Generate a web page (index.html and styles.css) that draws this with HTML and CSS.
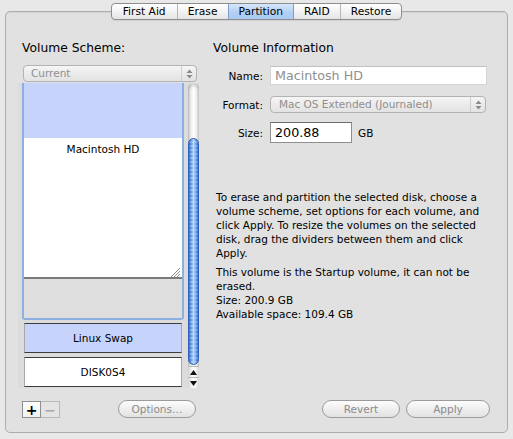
FILE: index.html
```html
<!DOCTYPE html>
<html lang="en">
<head>
<meta charset="utf-8">
<title>Disk Utility – Partition</title>
<link rel="stylesheet" href="styles.css">
</head>
<body>
<div class="window">
  <div class="tabs">
    <div class="tab">First Aid</div>
    <div class="tab">Erase</div>
    <div class="tab selected">Partition</div>
    <div class="tab">RAID</div>
    <div class="tab">Restore</div>
  </div>

  <div class="panel">
    <div class="col left">
      <div class="heading">Volume Scheme:</div>
      <div class="popup scheme-popup">
        <span class="popup-text">Current</span>
        <span class="popup-arrows"><svg width="7" height="10" viewBox="0 0 7 10"><path d="M3.5 0.5 L6.5 4 H0.5 Z M0.5 6 H6.5 L3.5 9.5 Z" fill="#8a8a8a"/></svg></span>
      </div>

      <div class="map">
        <div class="volumes">
          <div class="vol-selected">
            <div class="used"></div>
            <div class="vol-white">
              <span class="vol-name">Macintosh HD</span>
              <svg class="grip" width="10" height="10" viewBox="0 0 10 10">
                <path d="M1 10 L10 1 M4 10 L10 4 M7 10 L10 7" stroke="#8c8c8c" stroke-width="1"/>
                <path d="M2 10 L10 2 M5 10 L10 5 M8 10 L10 8" stroke="#ffffff" stroke-width="1"/>
              </svg>
            </div>
            <div class="vol-divider"></div>
            <div class="vol-gray"></div>
          </div>
          <div class="vol swap">Linux Swap</div>
          <div class="vol plain">DISK0S4</div>
        </div>
        <div class="scrollbar">
          <div class="track"><div class="thumb"></div></div>
          <div class="arrow up"><svg width="7" height="5" viewBox="0 0 7 5"><path d="M3.5 0 L7 5 H0 Z" fill="#111"/></svg></div>
          <div class="arrow down"><svg width="7" height="5" viewBox="0 0 7 5"><path d="M0 0 H7 L3.5 5 Z" fill="#111"/></svg></div>
        </div>
      </div>

      <div class="footer left-footer">
        <div class="pm-group">
          <button class="pm plus">+</button>
          <button class="pm minus">−</button>
        </div>
        <button class="pill options">Options…</button>
      </div>
    </div>

    <div class="col right">
      <div class="heading">Volume Information</div>
      <div class="row name-row">
        <span class="label">Name:</span>
        <div class="field name-field">Macintosh HD</div>
      </div>
      <div class="row format-row">
        <span class="label">Format:</span>
        <div class="popup format-popup">
          <span class="popup-text">Mac OS Extended (Journaled)</span>
          <span class="popup-arrows"><svg width="7" height="10" viewBox="0 0 7 10"><path d="M3.5 0.5 L6.5 4 H0.5 Z M0.5 6 H6.5 L3.5 9.5 Z" fill="#8a8a8a"/></svg></span>
        </div>
      </div>
      <div class="row size-row">
        <span class="label">Size:</span>
        <div class="field size-field">200.88</div>
        <span class="unit">GB</span>
      </div>

      <p class="info first">To erase and partition the selected disk, choose a<br>volume scheme, set options for each volume, and<br>click Apply. To resize the volumes on the selected<br>disk, drag the dividers between them and click<br>Apply.</p>
      <p class="info second">This volume is the Startup volume, it can not be<br>erased.<br>Size: 200.9 GB<br>Available space: 109.4 GB</p>

      <div class="footer right-footer">
        <button class="pill revert">Revert</button>
        <button class="pill apply">Apply</button>
      </div>
    </div>
  </div>
</div>
</body>
</html>
```
FILE: styles.css
```css
* { box-sizing: border-box; }
html, body { margin: 0; padding: 0; }
body {
  width: 513px;
  height: 439px;
  overflow: hidden;
  background: #e8e8e8;
  font-family: "DejaVu Sans", "Liberation Sans", sans-serif;
  color: #000;
}
.window {
  display: flex;
  flex-direction: column;
  padding: 3px 5px 0;
}

/* segmented tabs */
.tabs {
  align-self: center;
  display: flex;
  height: 17px;
  border: 1px solid #8e8e8e;
  border-radius: 4px;
  background: linear-gradient(#ffffff, #f3f3f3 50%, #e4e4e4);
  position: relative;
  z-index: 1;
  box-shadow: 0 1px 1px rgba(0,0,0,0.08);
}
.tab {
  font-size: 10.7px;
  line-height: 15px;
  padding: 0 10px;
  border-left: 1px solid #b6b6b6;
}
.tab:first-child { border-left: none; border-radius: 3px 0 0 3px; padding-left: 11px; padding-right: 11px; }
.tab:last-child { border-radius: 0 3px 3px 0; }
.tab.selected {
  background: linear-gradient(#d7e7fb, #b3d0f4 55%, #a9caf2);
  border-left-color: #7d9ccc;
}
.tab.selected + .tab { border-left-color: #7d9ccc; }

/* panel */
.panel {
  margin-top: -9px;
  height: 422px;
  border: 1px solid #adadad;
  border-radius: 5px;
  background: #e1e1e1;
  box-shadow: inset 0 1px 1px rgba(0,0,0,0.06);
  display: grid;
  grid-template-columns: 181px 277px;
  column-gap: 14px;
  padding: 0 17px 14px 12px;
}
.col {
  display: flex;
  flex-direction: column;
  padding-top: 29px;
  min-height: 0;
}
.heading {
  font-size: 12.3px;
  line-height: 15px;
}
.left .heading { padding-left: 4px; }

/* popups */
.popup {
  display: flex;
  align-items: center;
  height: 17px;
  border: 1px solid #b3b3b3;
  border-radius: 4px;
  background: linear-gradient(#f6f6f6, #ebebeb 50%, #e3e3e3);
  font-size: 10.5px;
  color: #8f8f8f;
}
.popup-text { flex: 1; padding-left: 7px; line-height: 15px; white-space: nowrap; }
.popup-arrows {
  width: 15px;
  height: 100%;
  display: flex;
  align-items: center;
  justify-content: center;
  border-left: 1px solid #d0d0d0;
}
.scheme-popup {
  margin-top: 9px;
  margin-left: 5px;
  width: 174px;
}

/* volume map */
.map {
  margin-top: 1px;
  height: 305px;
  display: flex;
  background: #dcdcdc;
  overflow: hidden;
}
.volumes {
  width: 166px;
  padding-left: 4px;
  display: flex;
  flex-direction: column;
}
.vol-selected {
  display: flex;
  flex-direction: column;
  border: 2px solid #8db0e4;
  border-top: none;
  border-radius: 0 0 3px 3px;
  box-shadow: inset 1px 0 0 #a9a9a9, inset -1px 0 0 #a9a9a9;
}
.used { height: 55px; background: #c6d3fb; }
.vol-white {
  height: 139px;
  background: #ffffff;
  position: relative;
  text-align: center;
  font-size: 10.5px;
  line-height: 14px;
  padding-top: 4px;
}
.grip { position: absolute; right: 2px; bottom: 0; }
.vol-divider { height: 2px; background: #7b7b7b; }
.vol-gray { height: 39px; background: #dedede; }
.vol {
  margin: 0 2px;
  height: 30px;
  border-top: 1px solid #3c3c3c;
  border-bottom: 1px solid #3c3c3c;
  border-left: 1px solid #a8a8a8;
  border-right: 1px solid #a8a8a8;
  font-size: 10.5px;
  line-height: 28px;
  text-align: center;
}
.swap { margin-top: 3px; background: #c6d3fb; }
.plain { margin-top: 4px; background: #ffffff; }

/* scrollbar */
.scrollbar {
  margin-left: 4px;
  width: 11px;
  display: flex;
  flex-direction: column;
}
.track {
  height: 283px;
  border-radius: 6px 6px 0 0;
  background: linear-gradient(to right, #c4c4c4, #ececec 25%, #ffffff 50%, #f0f0f0 75%, #cdcdcd);
  box-shadow: inset 0 3px 3px rgba(0,0,0,0.15);
  padding-top: 55px;
}
.thumb {
  height: 227px;
  border: 1px solid #2b5fb8;
  border-radius: 6px;
  background:
    repeating-linear-gradient(to bottom, rgba(255,255,255,0) 0 2px, rgba(255,255,255,0.2) 2px 4px),
    linear-gradient(to right, #2a61c3, #6aa1ec 25%, #b2d4fa 50%, #72a9ef 75%, #3168c8);
}
.arrow {
  height: 11px;
  display: flex;
  align-items: center;
  justify-content: center;
  border-top: 1px solid #b9b9b9;
  background: linear-gradient(to right, #d2d2d2, #ffffff 45%, #f2f2f2 75%, #d6d6d6);
}

/* footers */
.footer {
  margin-top: auto;
  display: flex;
  height: 18px;
}
.left-footer { padding-left: 4px; padding-right: 3px; align-items: flex-start; }
.pm-group { display: flex; margin-top: 1px; }
.pm {
  width: 19px;
  height: 17px;
  padding: 0;
  margin: 0;
  font-family: "DejaVu Sans", sans-serif;
  font-size: 14px;
  line-height: 14px;
}
.plus {
  border: 1px solid #8f8f8f;
  background: linear-gradient(#ffffff, #f0f0f0);
  color: #000;
  font-weight: bold;
}
.minus {
  border: 1px solid #b8b8b8;
  border-left: none;
  background: #e4e4e4;
  color: #a8a8a8;
  font-weight: bold;
}
.pill {
  height: 18px;
  padding: 0;
  margin: 0;
  border: 1px solid #9b9b9b;
  border-radius: 9px;
  background: linear-gradient(#fdfdfd, #efefef 50%, #e2e2e2);
  font-family: "DejaVu Sans", sans-serif;
  font-size: 10.5px;
  line-height: 16px;
  color: #8b8b8b;
}
.options { margin-left: auto; width: 78px; }
.right-footer { justify-content: flex-end; gap: 6px; }
.revert { width: 78px; }
.apply { width: 84px; }

/* form */
.row { display: flex; align-items: center; }
.label {
  width: 50px;
  margin-right: 7px;
  text-align: right;
  font-size: 10.5px;
}
.name-row { margin-top: 10px; height: 19px; }
.format-row { margin-top: 11px; height: 17px; }
.size-row { margin-top: 9px; height: 21px; }
.field {
  height: 100%;
  background: #ffffff;
  border: 1px solid #c4c4c4;
  border-top-color: #a6a6a6;
  font-size: 12.7px;
  padding-left: 4px;
  line-height: 17px;
}
.name-field { width: 217px; color: #8e8e8e; border-color: #d4d4d4; border-top-color: #c0c0c0; }
.size-field { width: 82px; color: #000; line-height: 19px; border-color: #8e8e8e; border-top-color: #6e6e6e; }
.format-popup { width: 216px; }
.format-popup .popup-text { padding-left: 8px; }
.unit { margin-left: 6px; font-size: 10.5px; }

.info {
  margin: 0;
  font-size: 10.5px;
  line-height: 14px;
  padding-left: 3px;
  white-space: nowrap;
}
.info.first { margin-top: 47px; }
.info.second { margin-top: 5px; }
```
